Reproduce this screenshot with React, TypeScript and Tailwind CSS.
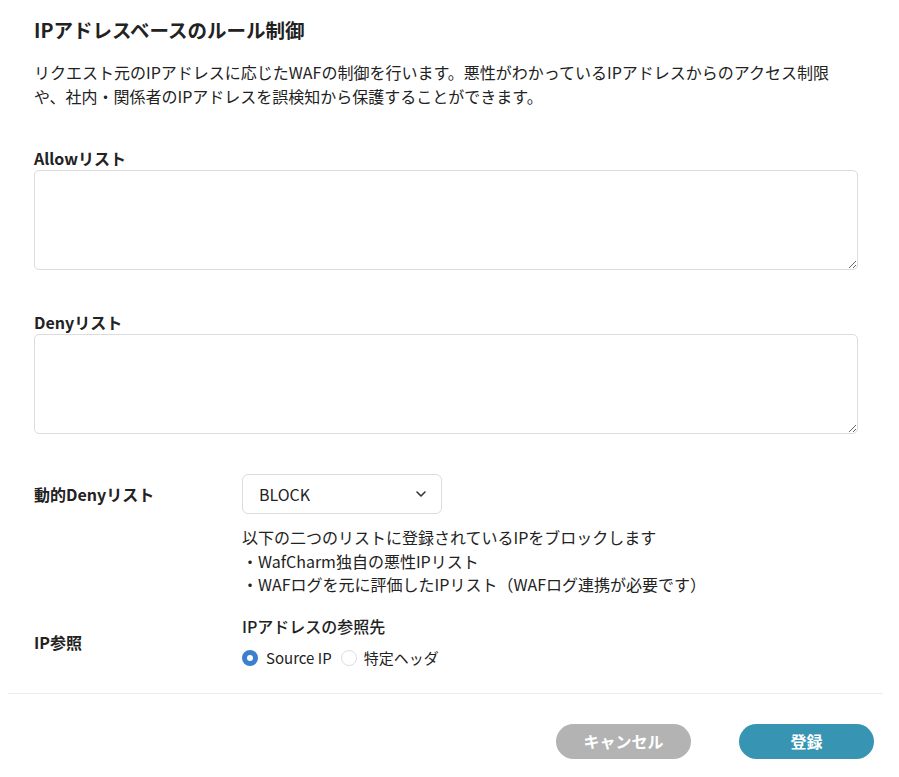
import React from "react";

const font = { fontFamily: '"Noto Sans CJK JP", "Noto Sans", sans-serif' };

export default function App() {
  return (
    <div className="w-[899px] min-h-[777px] bg-white text-[#222]" style={font}>
      <div className="mx-[8px] w-[875px]">
        <div className="px-[26px] pt-[16px]">
          <h1 className="text-[19.5px] leading-[28px] font-bold text-[#222]">IPアドレスベースのルール制御</h1>
          <p className="mt-[16px] text-[16px] leading-[24px] text-[#222]">
            リクエスト元のIPアドレスに応じたWAFの制御を行います。悪性がわかっているIPアドレスからのアクセス制限
            <br />
            や、社内・関係者のIPアドレスを誤検知から保護することができます。
          </p>

          <div className="mt-[38px]">
            <div className="text-[16px] leading-[24px] font-bold">Allowリスト</div>
            <textarea className="block w-[824px] h-[100px] border border-[#dcdcdc] rounded-[5px] resize-y outline-none" />
          </div>

          <div className="mt-[40px]">
            <div className="text-[16px] leading-[24px] font-bold">Denyリスト</div>
            <textarea className="block w-[824px] h-[100px] border border-[#dcdcdc] rounded-[5px] resize-y outline-none" />
          </div>

          <div className="mt-[40px] flex">
            <div className="w-[208px] h-[40px] flex items-center text-[16px] font-bold">動的Denyリスト</div>
            <div>
              <div className="w-[200px] h-[40px] border border-[#dcdcdc] rounded-[6px] flex items-center justify-between pl-[16px] pr-[14px] text-[16px]">
                <span>BLOCK</span>
                <svg width="12" height="8" viewBox="0 0 12 8" fill="none">
                  <path d="M2 2l4 4 4-4" stroke="#333" strokeWidth="1.6" strokeLinecap="round" strokeLinejoin="round" />
                </svg>
              </div>
              <div className="mt-[12px] text-[16px] leading-[23.5px]">
                <div>以下の二つのリストに登録されているIPをブロックします</div>
                <div>・WafCharm独自の悪性IPリスト</div>
                <div>・WAFログを元に評価したIPリスト（WAFログ連携が必要です）</div>
              </div>
            </div>
          </div>

          <div className="mt-[17px] flex items-center">
            <div className="w-[208px] text-[16px] font-bold">IP参照</div>
            <div>
              <div className="text-[16px] leading-[24px] font-medium">IPアドレスの参照先</div>
              <div className="mt-[8px] flex items-center text-[15px] leading-[24px]">
                <span className="w-[16px] h-[16px] rounded-full bg-[#3b7fcf] flex items-center justify-center">
                  <span className="w-[6px] h-[6px] rounded-full bg-white" />
                </span>
                <span className="ml-[8px]">Source IP</span>
                <span className="ml-[9px] w-[16px] h-[16px] rounded-full border-[1.5px] border-[#d8dee8] bg-white" />
                <span className="ml-[7px]">特定ヘッダ</span>
              </div>
            </div>
          </div>
        </div>

        <div className="mt-[23px] border-t border-[#ececec]" />

        <div className="flex justify-end gap-[48px] pr-[9px] pt-[30px]">
          <button className="w-[135px] h-[35px] rounded-full bg-[#b3b3b3] text-white text-[16px] font-bold">キャンセル</button>
          <button className="w-[135px] h-[35px] rounded-full bg-[#3795b3] text-white text-[16px] font-bold">登録</button>
        </div>
      </div>
    </div>
  );
}
